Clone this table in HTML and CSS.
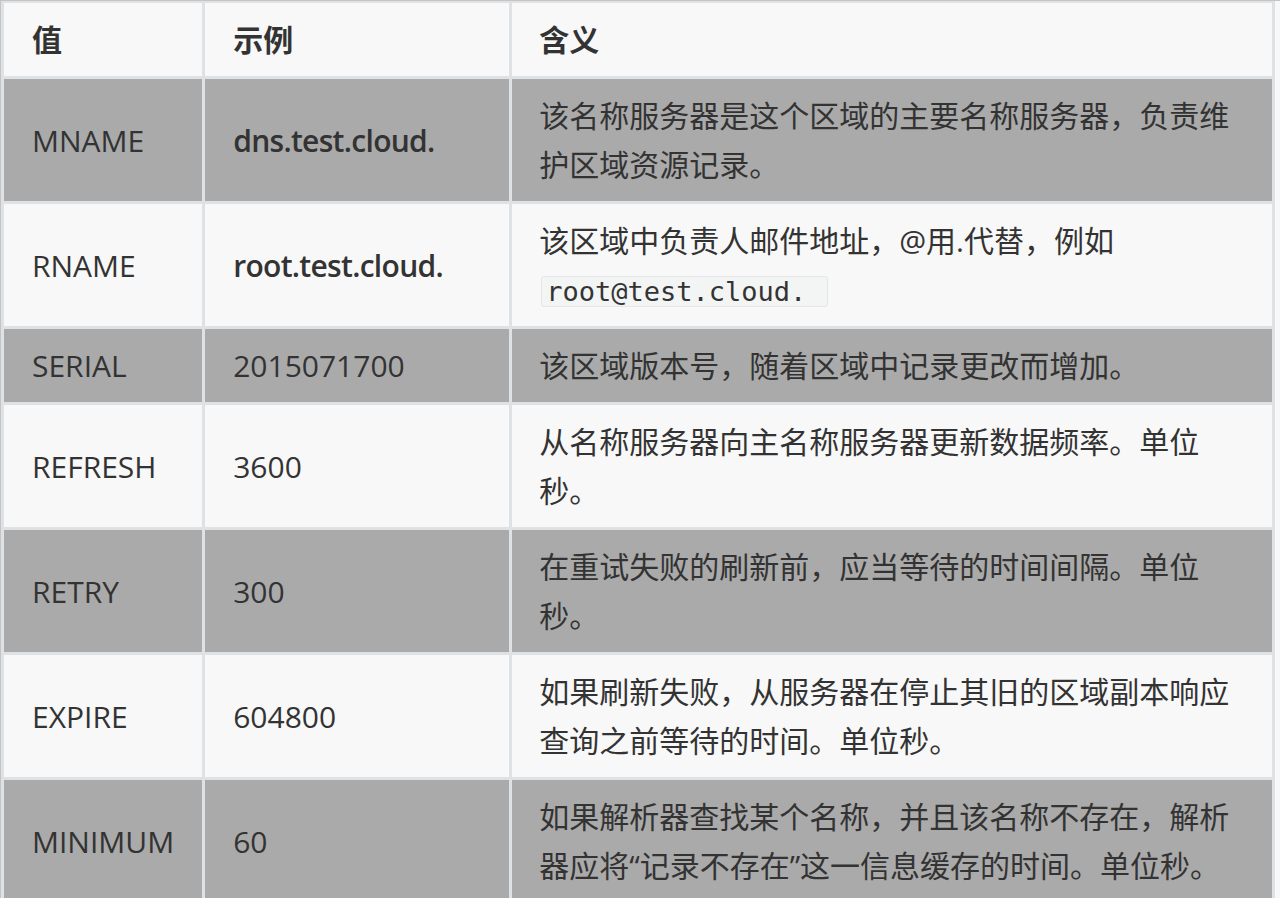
FILE: index.html
```html
<!DOCTYPE html>
<html lang="zh-CN">
<head>
<meta charset="utf-8">
<title>SOA</title>
<link rel="stylesheet" href="styles.css">
</head>
<body>
<div class="frame">
<table class="soa">
  <thead>
    <tr><th class="c1">值</th><th class="c2">示例</th><th class="c3">含义</th></tr>
  </thead>
  <tbody>
    <tr class="dark"><td>MNAME</td><td><strong>dns.test.cloud.</strong></td><td>该名称服务器是这个区域的主要名称服务器，负责维护区域资源记录。</td></tr>
    <tr><td>RNAME</td><td><strong>root.test.cloud.</strong></td><td>该区域中负责人邮件地址，@用.代替，例如 <code>root@test.cloud.</code></td></tr>
    <tr class="dark"><td>SERIAL</td><td>2015071700</td><td>该区域版本号，随着区域中记录更改而增加。</td></tr>
    <tr><td>REFRESH</td><td>3600</td><td>从名称服务器向主名称服务器更新数据频率。单位秒。</td></tr>
    <tr class="dark"><td>RETRY</td><td>300</td><td>在重试失败的刷新前，应当等待的时间间隔。单位秒。</td></tr>
    <tr><td>EXPIRE</td><td>604800</td><td>如果刷新失败，从服务器在停止其旧的区域副本响应查询之前等待的时间。单位秒。</td></tr>
    <tr class="dark"><td>MINIMUM</td><td>60</td><td>如果解析器查找某个名称，并且该名称不存在，解析器应将“记录不存在”这一信息缓存的时间。单位秒。</td></tr>
  </tbody>
</table>
</div>
</body>
</html>
```
FILE: styles.css
```css
html, body {
  margin: 0;
  padding: 0;
  background: #f8f8f8;
  overflow: hidden;
}
.frame {
  width: 1400px;
  height: 898px;
  overflow: hidden;
  border-top: 1px solid #c4c4c4;
  border-left: 1px solid #c4c4c4;
  box-sizing: border-box;
}
.soa {
  border-collapse: separate;
  border-spacing: 3px;
  margin: -1px 0 0 0;
  background: #dfe2e5;
  font-family: "Open Sans", "Noto Sans CJK SC", sans-serif;
  font-size: 30px;
  line-height: 49px;
  color: #333333;
}
.soa th, .soa td {
  padding: 12px 28px 12px 28px;
  vertical-align: middle;
  text-align: left;
  background: #f8f8f8;
}
.soa th {
  font-weight: 700;
}
.soa .c1 { width: 141px; }
.soa .c2 { width: 248px; }
.soa .c3 { width: 705px; padding-left: 27px; }
.soa td:nth-child(3) { padding-left: 27px; }
.soa tr.dark td {
  background: #aaaaaa;
}
.soa strong {
  font-weight: 600;
  letter-spacing: -0.7px;
}
.soa code {
  font-family: "DejaVu Sans Mono", "Liberation Mono", monospace;
  font-size: 27px;
  line-height: 29px;
  background: #f3f4f4;
  border: 1px solid #e4e6e8;
  border-radius: 3px;
  padding: 0 21px 0 4px;
  display: inline-block;
  margin-left: 2px;
}
```
